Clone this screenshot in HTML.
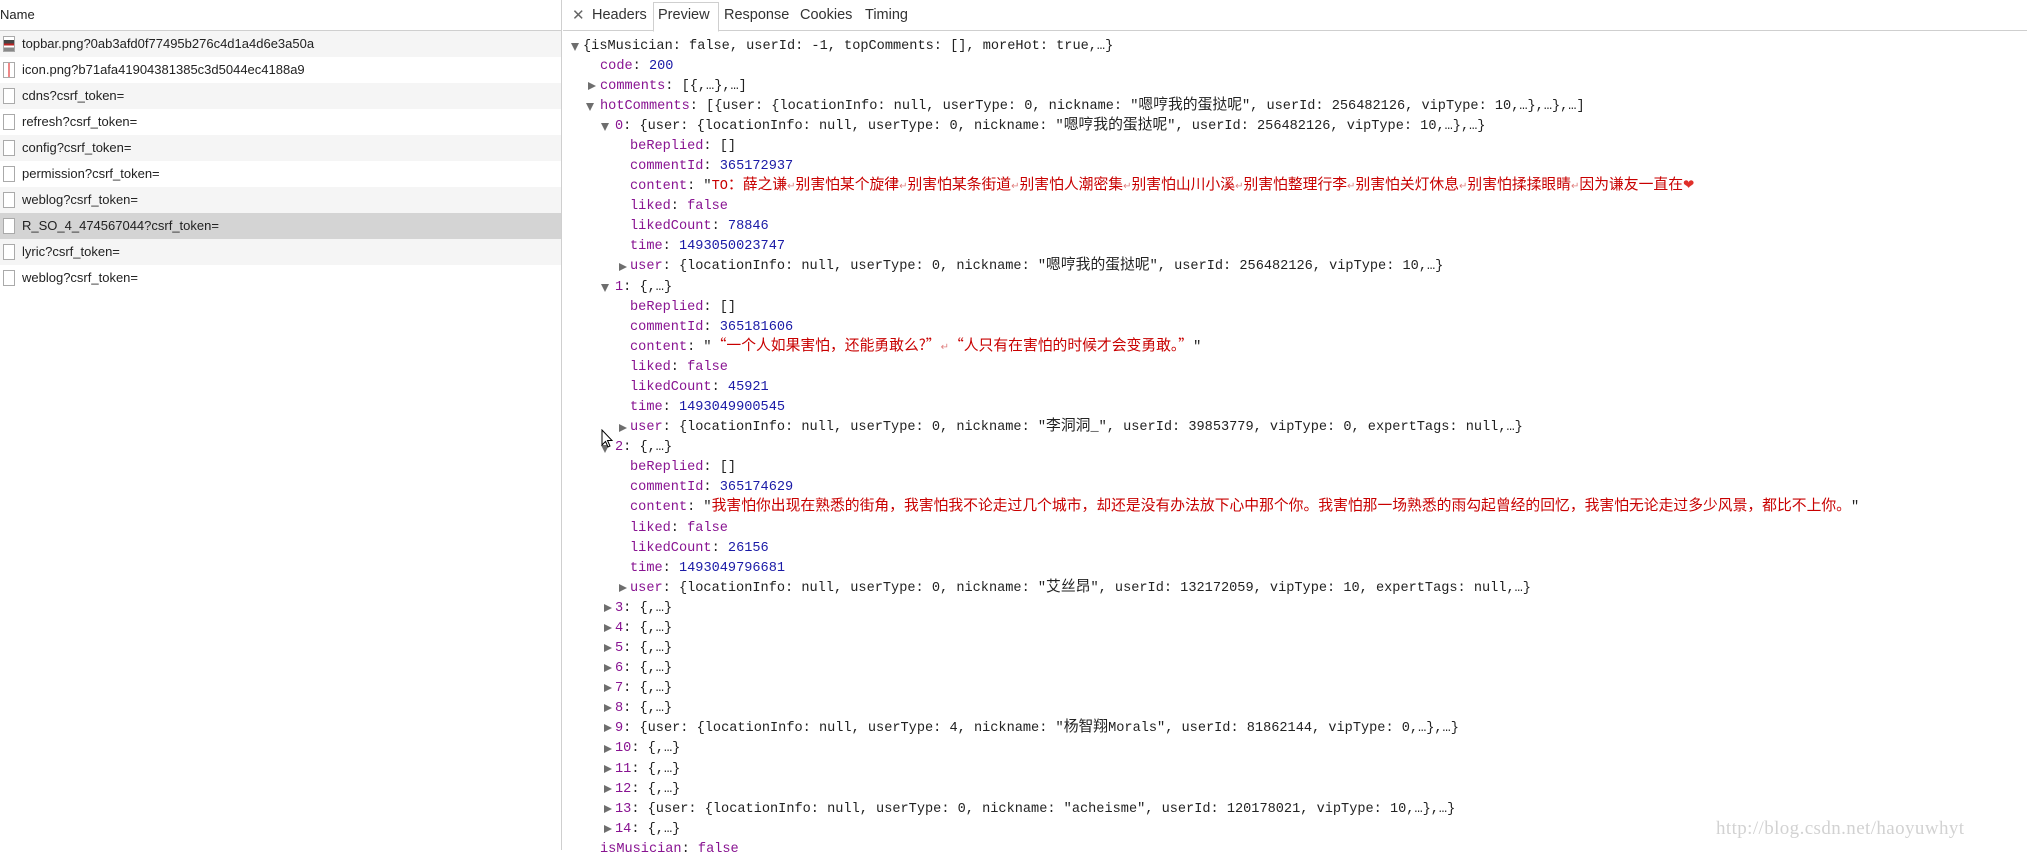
<!DOCTYPE html>
<html><head><meta charset="utf-8">
<style>
*{margin:0;padding:0;box-sizing:border-box}
body{width:2027px;height:850px;overflow:hidden;background:#fff;position:relative;font-family:"Liberation Sans","Noto Sans CJK SC",sans-serif;color:#222}
#left{position:absolute;left:0;top:0;width:562px;height:850px;border-right:1px solid #cfcfcf}
#lh{height:31px;border-bottom:1px solid #cfcfcf;font-size:13px;line-height:30px;padding-left:0}
.row{height:26px;font-size:13px;line-height:26px;padding-left:22px;position:relative;color:#222}
.row.g{background:#f5f5f5}.row.s{background:#d4d4d4}
.row i{position:absolute;left:3px;top:5px;width:12px;height:16px;border:1px solid #aaa;background:#fff}
#tabs{position:absolute;left:563px;top:0;right:0;height:31px;border-bottom:1px solid #cfcfcf;font-size:14.5px;color:#333}
#tabs span{position:absolute;top:7px}
#pv{position:absolute;left:90px;top:2px;width:66px;height:30px;border:1px solid #cfcfcf;border-bottom:1px solid #fff;background:#fff}
.l{position:absolute;font-family:"Liberation Mono",monospace;font-size:13.6px;line-height:20px;height:20px;white-space:pre;color:#222}
.k{color:#881391}.n{color:#1a1aa6}.r{color:#c80000}.b{color:#881391}
.c{font-family:"Noto Sans CJK SC",sans-serif;font-size:14.8px;line-height:0}
.a{color:#e08080;font-size:10px;line-height:0}
.t{position:absolute;width:0;height:0}
.td{border-left:4.5px solid transparent;border-right:4.5px solid transparent;border-top:8px solid #6e6e6e}
.tr{border-top:4.5px solid transparent;border-bottom:4.5px solid transparent;border-left:8px solid #6e6e6e}
#wm{position:absolute;left:1716px;top:818px;font-family:"Liberation Serif",serif;font-size:19px;color:#d2d2d2;letter-spacing:0.4px}
</style></head><body>
<div id="left">
<div id="lh">Name</div>
<div class="row g"><i style="background:linear-gradient(#fff 20%,#444 20%,#444 45%,#b22 45%,#b22 60%,#fff 60%,#fff 75%,#888 75%)"></i>topbar.png?0ab3afd0f77495b276c4d1a4d6e3a50a</div>
<div class="row"><i style="background:linear-gradient(90deg,#fff 40%,#e88 40%,#e88 60%,#fff 60%)"></i>icon.png?b71afa41904381385c3d5044ec4188a9</div>
<div class="row g"><i></i>cdns?csrf_token=</div>
<div class="row"><i></i>refresh?csrf_token=</div>
<div class="row g"><i></i>config?csrf_token=</div>
<div class="row"><i></i>permission?csrf_token=</div>
<div class="row g"><i></i>weblog?csrf_token=</div>
<div class="row s"><i></i>R_SO_4_474567044?csrf_token=</div>
<div class="row g"><i></i>lyric?csrf_token=</div>
<div class="row"><i></i>weblog?csrf_token=</div>
</div>
<div id="tabs">
<div id="pv"></div>
<span style="left:9px;top:6px;color:#666;font-size:15px">✕</span>
<span style="left:29px">Headers</span>
<span style="left:95px">Preview</span>
<span style="left:161px">Response</span>
<span style="left:237px">Cookies</span>
<span style="left:302px">Timing</span>
</div>

<div class="t td" style="left:571px;top:43px"></div>
<div class="l" style="left:583px;top:36.5px">{isMusician: false, userId: -1, topComments: [], moreHot: true,…}</div>
<div class="l" style="left:600px;top:56.6px"><span class="k">code</span>: <span class="n">200</span></div>
<div class="t tr" style="left:588px;top:82px"></div>
<div class="l" style="left:600px;top:76.7px"><span class="k">comments</span>: [{,…},…]</div>
<div class="t td" style="left:586px;top:103px"></div>
<div class="l" style="left:600px;top:96.7px"><span class="k">hotComments</span>: [{user: {locationInfo: null, userType: 0, nickname: "<span class="c">嗯哼我的蛋挞呢</span>", userId: 256482126, vipType: 10,…},…},…]</div>
<div class="t td" style="left:601px;top:123px"></div>
<div class="l" style="left:615px;top:116.8px"><span class="k">0</span>: {user: {locationInfo: null, userType: 0, nickname: "<span class="c">嗯哼我的蛋挞呢</span>", userId: 256482126, vipType: 10,…},…}</div>
<div class="l" style="left:630px;top:136.9px"><span class="k">beReplied</span>: []</div>
<div class="l" style="left:630px;top:157px"><span class="k">commentId</span>: <span class="n">365172937</span></div>
<div class="l" style="left:630px;top:177.1px"><span class="k">content</span>: "<span class="r">TO<span class="c">：薛之谦</span><span class="a">↵</span><span class="c">别害怕某个旋律</span><span class="a">↵</span><span class="c">别害怕某条街道</span><span class="a">↵</span><span class="c">别害怕人潮密集</span><span class="a">↵</span><span class="c">别害怕山川小溪</span><span class="a">↵</span><span class="c">别害怕整理行李</span><span class="a">↵</span><span class="c">别害怕关灯休息</span><span class="a">↵</span><span class="c">别害怕揉揉眼睛</span><span class="a">↵</span><span class="c">因为谦友一直在</span></span><span style="color:#e0302a;line-height:0">❤</span></div>
<div class="l" style="left:630px;top:197.2px"><span class="k">liked</span>: <span class="b">false</span></div>
<div class="l" style="left:630px;top:217.2px"><span class="k">likedCount</span>: <span class="n">78846</span></div>
<div class="l" style="left:630px;top:237.3px"><span class="k">time</span>: <span class="n">1493050023747</span></div>
<div class="t tr" style="left:619px;top:263px"></div>
<div class="l" style="left:630px;top:257.4px"><span class="k">user</span>: {locationInfo: null, userType: 0, nickname: "<span class="c">嗯哼我的蛋挞呢</span>", userId: 256482126, vipType: 10,…}</div>
<div class="t td" style="left:601px;top:284px"></div>
<div class="l" style="left:615px;top:277.5px"><span class="k">1</span>: {,…}</div>
<div class="l" style="left:630px;top:297.6px"><span class="k">beReplied</span>: []</div>
<div class="l" style="left:630px;top:317.7px"><span class="k">commentId</span>: <span class="n">365181606</span></div>
<div class="l" style="left:630px;top:337.8px"><span class="k">content</span>: "<span class="r c">“一个人如果害怕，还能勇敢么?”<span class="a">↵</span>“人只有在害怕的时候才会变勇敢。”</span>"</div>
<div class="l" style="left:630px;top:357.8px"><span class="k">liked</span>: <span class="b">false</span></div>
<div class="l" style="left:630px;top:377.9px"><span class="k">likedCount</span>: <span class="n">45921</span></div>
<div class="l" style="left:630px;top:398px"><span class="k">time</span>: <span class="n">1493049900545</span></div>
<div class="t tr" style="left:619px;top:424px"></div>
<div class="l" style="left:630px;top:418.1px"><span class="k">user</span>: {locationInfo: null, userType: 0, nickname: "<span class="c">李洞洞</span>_", userId: 39853779, vipType: 0, expertTags: null,…}</div>
<div class="t td" style="left:601px;top:445px"></div>
<div class="l" style="left:615px;top:438.2px"><span class="k">2</span>: {,…}</div>
<div class="l" style="left:630px;top:458.3px"><span class="k">beReplied</span>: []</div>
<div class="l" style="left:630px;top:478.4px"><span class="k">commentId</span>: <span class="n">365174629</span></div>
<div class="l" style="left:630px;top:498.4px"><span class="k">content</span>: "<span class="r c">我害怕你出现在熟悉的街角，我害怕我不论走过几个城市，却还是没有办法放下心中那个你。我害怕那一场熟悉的雨勾起曾经的回忆，我害怕无论走过多少风景，都比不上你。</span>"</div>
<div class="l" style="left:630px;top:518.5px"><span class="k">liked</span>: <span class="b">false</span></div>
<div class="l" style="left:630px;top:538.6px"><span class="k">likedCount</span>: <span class="n">26156</span></div>
<div class="l" style="left:630px;top:558.7px"><span class="k">time</span>: <span class="n">1493049796681</span></div>
<div class="t tr" style="left:619px;top:584px"></div>
<div class="l" style="left:630px;top:578.8px"><span class="k">user</span>: {locationInfo: null, userType: 0, nickname: "<span class="c">艾丝昂</span>", userId: 132172059, vipType: 10, expertTags: null,…}</div>

<div class="t tr" style="left:604px;top:604px"></div><div class="l" style="left:615px;top:598.9px"><span class="k">3</span>: {,…}</div>
<div class="t tr" style="left:604px;top:624px"></div><div class="l" style="left:615px;top:619px"><span class="k">4</span>: {,…}</div>
<div class="t tr" style="left:604px;top:644px"></div><div class="l" style="left:615px;top:639px"><span class="k">5</span>: {,…}</div>
<div class="t tr" style="left:604px;top:664px"></div><div class="l" style="left:615px;top:659.1px"><span class="k">6</span>: {,…}</div>
<div class="t tr" style="left:604px;top:684px"></div><div class="l" style="left:615px;top:679.2px"><span class="k">7</span>: {,…}</div>
<div class="t tr" style="left:604px;top:704px"></div><div class="l" style="left:615px;top:699.3px"><span class="k">8</span>: {,…}</div>
<div class="t tr" style="left:604px;top:724px"></div><div class="l" style="left:615px;top:719.4px"><span class="k">9</span>: {user: {locationInfo: null, userType: 4, nickname: "<span class="c">杨智翔</span>Morals", userId: 81862144, vipType: 0,…},…}</div>
<div class="t tr" style="left:604px;top:745px"></div><div class="l" style="left:615px;top:739.4px"><span class="k">10</span>: {,…}</div>
<div class="t tr" style="left:604px;top:765px"></div><div class="l" style="left:615px;top:759.5px"><span class="k">11</span>: {,…}</div>
<div class="t tr" style="left:604px;top:785px"></div><div class="l" style="left:615px;top:779.6px"><span class="k">12</span>: {,…}</div>
<div class="t tr" style="left:604px;top:805px"></div><div class="l" style="left:615px;top:799.7px"><span class="k">13</span>: {user: {locationInfo: null, userType: 0, nickname: "acheisme", userId: 120178021, vipType: 10,…},…}</div>
<div class="t tr" style="left:604px;top:825px"></div><div class="l" style="left:615px;top:819.8px"><span class="k">14</span>: {,…}</div>
<div class="l" style="left:600px;top:839.9px"><span class="k">isMusician</span>: <span class="b">false</span></div>

<svg style="position:absolute;left:601px;top:429px" width="13" height="20" viewBox="0 0 13 20"><path d="M1 1 L1 16 L4.5 12.5 L7 18 L9 17 L6.5 11.5 L11 11.5 Z" fill="#fff" stroke="#000" stroke-width="1"/></svg>

<div id="wm">http://blog.csdn.net/haoyuwhyt</div>
</body></html>
